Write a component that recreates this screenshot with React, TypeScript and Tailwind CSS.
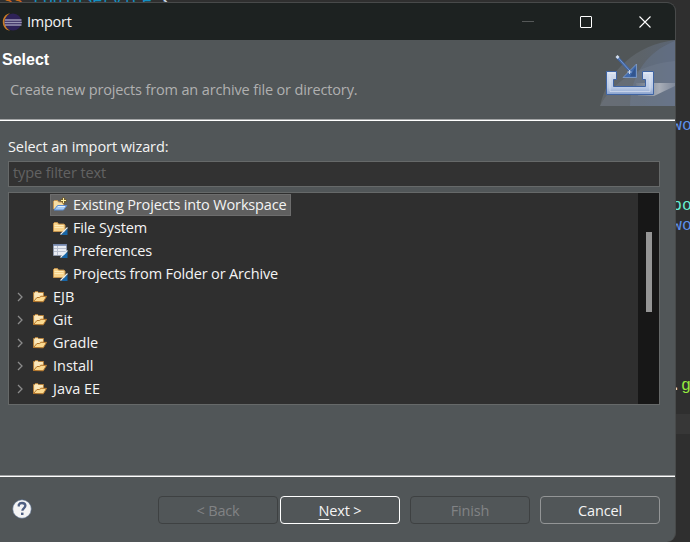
import React from "react";

const FolderOpen = () => (
  <svg width="16" height="16" viewBox="0 0 16 16">
    <path d="M1.5 12.5V3.5h1l.8-1h2.4l.8 1h5V7" fill="#f6dca6" stroke="#b5813c" />
    <path d="M3 5h7.5M3 7h4" stroke="#fff3d2" />
    <path d="M1.5 12.5L5 8.5h2.6L9 7.3h5.6L11.3 12.8z" fill="#fbd98f" stroke="#b4752a" strokeLinejoin="round" />
  </svg>
);

const ProjectFolder = () => (
  <svg width="16" height="16" viewBox="0 0 16 16">
    <path d="M1.5 12V4.5l1-1h3l1 1.5h5V10" fill="#f6dda5" stroke="#c99650" />
    <path d="M2 13L5.5 8.5h9.3L11.5 13z" fill="#a8cbf3" stroke="#5a8bd0" strokeLinejoin="round" />
    <path d="M6 9.5h7" stroke="#e0effd" />
    <path d="M11.5 .5v6M8.5 3.5h6" stroke="#755c20" strokeWidth="2.4" />
    <path d="M11.5 1v5M9 3.5h5" stroke="#fff1a5" />
  </svg>
);

const Folder = () => (
  <svg width="16" height="16" viewBox="0 0 16 16">
    <path d="M1.5 11.5v-8l1-1h3l1 1.6h5.5l1 1v6.4z" fill="#f7d28a" stroke="#c4924c" />
    <path d="M2.5 5.5h9M2.5 7.5h9" stroke="#ffecb9" />
    <path d="M15.5 8.5v6.500H9z" fill="#1766a8" />
    <path d="M8.500 14.500L15.500 7.500" stroke="#e6eef4" strokeWidth="1.1" />
  </svg>
);

const Preferences = () => (
  <svg width="16" height="16" viewBox="0 0 16 16">
    <path d="M1.5 1.5h13v11h-13z" fill="#e9ecf3" stroke="#8f99ab" />
    <path d="M1 2h14" stroke="#6a7fa8" strokeWidth="1.6" />
    <path d="M2 5.5h12M2 8.5h12M5.5 3v9" stroke="#b9c0cf" />
    <path d="M15.500 8.500v6.500H9z" fill="#1766a8" />
    <path d="M8.500 14.500L15.500 7.500" stroke="#e6eef4" strokeWidth="1.1" />
  </svg>
);

const EclipseLogo = () => (
  <svg width="20" height="20" viewBox="0 0 20 20">
    <path d="M8 1.2C3 2 .8 6 .8 10s2.200 8 7.200 8.800C4.600 16.500 3.400 13.600 3.400 10S4.600 3.500 8 1.200z" fill="#c97c26" />
    <circle cx="11" cy="10" r="8.600" fill="#2e2258" />
    <path d="M3 8h16.500M2.600 10.500h17.200M3 13h16.500" stroke="#9a95b3" strokeWidth="1.700" />
  </svg>
);

const ImportBanner = () => (
  <svg width="75" height="66" viewBox="0 0 75 66">
    <defs>
      <linearGradient id="sweep" x1="0" x2="1">
        <stop offset="0" stopColor="#6d7277" />
        <stop offset=".55" stopColor="#666e77" />
        <stop offset="1" stopColor="#63718c" />
      </linearGradient>
      <linearGradient id="floor" x1="0" x2="1">
        <stop offset="0" stopColor="#aab0b8" stopOpacity=".15" />
        <stop offset=".6" stopColor="#b4b8c0" />
        <stop offset="1" stopColor="#9fa6b4" stopOpacity=".5" />
      </linearGradient>
      <linearGradient id="tray" x1="0" x2="0" y1="0" y2="1">
        <stop offset="0" stopColor="#d8e1f1" />
        <stop offset=".7" stopColor="#b9c9e4" />
        <stop offset="1" stopColor="#8aa3cf" />
      </linearGradient>
    </defs>
    <path d="M0 66C8 30 36 5 75 0V66z" fill="url(#sweep)" opacity=".55" />
    <path d="M30 66C30 35 48 11 75 1V66z" fill="#6c7c9b" opacity=".36" />
    <path d="M0 66C12 42 40 24 75 21V66z" fill="#8792a5" opacity=".2" />
    <path d="M36 43H75V46L54 56H38z" fill="url(#floor)" opacity=".85" />
    <path d="M6.500 31.500h10v8h-3v7h32v-7h-3v-8h11v23h-47z" fill="url(#tray)" stroke="#3f64a3" />
    <path d="M8 33h7M44 33h7.500" stroke="#eef3fb" opacity=".8" />
    <path d="M10 35v16.500h40V35" fill="none" stroke="#eef2fa" opacity=".5" />
    <path d="M17 17L30 31" stroke="#4166a5" strokeWidth="2.600" />
    <path d="M17.500 17L29 30" stroke="#7596ca" />
    <path d="M36.500 24v13.500H23z" fill="#416bad" stroke="#839fcb" strokeWidth=".8" />
    <path d="M35.500 27v9.500H30z" fill="#31558f" />
    <path d="M17.500 15l2 2-2 2-2-2z" fill="#d3deee" />
    <path d="M29.500 30v4M27.500 32h4" stroke="#c8d6ec" />
  </svg>
);

const Row = ({ label, icon, selected = false }: { label: string; icon: React.ReactNode; selected?: boolean }) => (
  <li className="flex h-[23px] items-center pl-[41px]">
    <div className={`flex h-[22px] items-center gap-[5px] border pl-px pr-[3px] ${selected ? "border-[#6d6d6d] bg-[#606060]" : "border-transparent"}`}>
      {icon}
      <span>{label}</span>
    </div>
  </li>
);

const Group = ({ label }: { label: string }) => (
  <li className="flex h-[23px] items-center pl-2">
    <svg width="7" height="10" viewBox="0 0 7 10" className="mr-2" fill="none">
      <path d="M1 1l4 4-4 4" stroke="#8b8b8b" strokeWidth="1.3" />
    </svg>
    <FolderOpen />
    <span className="ml-[5px] tracking-normal">{label}</span>
  </li>
);

const button = "flex h-7 w-[120px] items-center justify-center rounded-[4px] border pt-px";

export default function App() {
  return (
    <div className="relative h-[542px] w-[690px] overflow-hidden bg-[#2f2f2f] font-['Open_Sans','Noto_Sans',sans-serif] text-[14.5px] tracking-[-0.15px]">
      <div className="absolute inset-0 font-['Liberation_Mono',monospace] text-[16.5px] leading-5 tracking-normal">
        <span className="absolute -top-[9px] left-[3px] text-[#cc6c1d]">ss</span>
        <span className="absolute -top-[9px] left-[33px] whitespace-pre text-[#1290c3]">LoginService <span className="text-[#c6d8e8]">{"{"}</span></span>
        <span className="absolute left-[672px] top-[116px] text-[#5e91ed]">wo</span>
        <span className="absolute left-[672px] top-[196px] text-[#66efd5]">po</span>
        <span className="absolute left-[672px] top-[216px] text-[#5e91ed]">wo</span>
        <span className="absolute left-[671px] top-[376px] text-[#e6e6fa]">.<span className="text-[#96ec3f]">g</span></span>
        <span className="absolute left-[676px] top-[414px] h-5 w-[14px] bg-[#373737]" />
      </div>

      <main className="relative mt-[2px] flex h-[540px] w-[676px] flex-col overflow-hidden rounded-r-[9px] border-r border-t border-[#484a4a] bg-[#515658] text-[#f4f4f4]">
        <header className="flex h-[37px] shrink-0 items-center bg-[#1d2221]">
          <div className="ml-[2px]"><EclipseLogo /></div>
          <h1 className="ml-[5px] tracking-[-0.25px]">Import</h1>
          <div className="ml-auto flex items-center pr-[23px]">
            <span className="mr-[46px] h-px w-3 bg-[#555858]" />
            <span className="mr-[46px] h-3 w-3 rounded-[1px] border border-white" />
            <svg width="14" height="14" viewBox="0 0 14 14" fill="none">
              <path d="M1.5 1.5l11 11M12.5 1.5l-11 11" stroke="#fff" strokeWidth="1.1" />
            </svg>
          </div>
        </header>

        <section className="flex h-[81px] shrink-0 justify-between border-b border-white shadow-[inset_0_-1px_#a2a4a5]">
          <div>
            <h2 className="ml-[2px] mt-[10px] font-['Liberation_Sans',Arial,sans-serif] text-[16px] font-bold leading-5 tracking-normal text-white">Select</h2>
            <p className="ml-[10px] mt-[10px] leading-5 text-[#b0b0b0]">Create new projects from an archive file or directory.</p>
          </div>
          <ImportBanner />
        </section>

        <section className="flex flex-1 flex-col pl-2 pr-[15px]">
          <label className="mt-4 leading-5 tracking-[-0.08px]">Select an import wizard:</label>
          <div className="mt-1 flex h-[26px] items-center border border-[#666969] bg-[#323232] pb-0.5 pl-1 tracking-[-0.08px] text-[#626262]">type filter text</div>
          <div className="mt-[5px] flex h-[213px] border border-[#666969] bg-[#2f2f2f]">
            <ul className="flex-1">
              <Row label="Existing Projects into Workspace" icon={<ProjectFolder />} selected />
              <Row label="File System" icon={<Folder />} />
              <Row label="Preferences" icon={<Preferences />} />
              <Row label="Projects from Folder or Archive" icon={<Folder />} />
              <Group label="EJB" />
              <Group label="Git" />
              <Group label="Gradle" />
              <Group label="Install" />
              <Group label="Java EE" />
            </ul>
            <div className="w-[21px] bg-[#171717] pl-2 pt-[39px]">
              <div className="h-20 w-1.5 bg-[#959595]" />
            </div>
          </div>
        </section>

        <footer className="flex h-[67px] shrink-0 items-start border-t border-[#a2a4a5] pl-3 pr-[15px] pt-5 shadow-[inset_0_1px_#fff]">
          <svg className="mt-[3px]" width="20" height="20" viewBox="0 0 20 20">
            <circle cx="10" cy="10" r="9.3" fill="#f4f4f4" stroke="#53698d" strokeWidth=".6" />
            <path d="M6.8 7.4V5.7C7.4 4.4 8.6 4 10 4c2 0 3.4 1.1 3.4 2.8 0 2.1-3 2.5-3 5" fill="none" stroke="#4e5f82" strokeWidth="2.3" />
            <path d="M9 13.6h2.5V16H9z" fill="#4e5f82" />
          </svg>
          <div className="ml-auto flex">
            <button className={`${button} border-[#3e4142] text-[#818385]`}>&lt; Back</button>
            <button className={`${button} ml-[2px] border-white`}><span className="underline underline-offset-[3px]">N</span>ext &gt;</button>
            <button className={`${button} ml-[10px] border-[#3e4142] text-[#818385]`}>Finish</button>
            <button className={`${button} ml-[10px] border-[#939596]`}>Cancel</button>
          </div>
        </footer>
      </main>
    </div>
  );
}
